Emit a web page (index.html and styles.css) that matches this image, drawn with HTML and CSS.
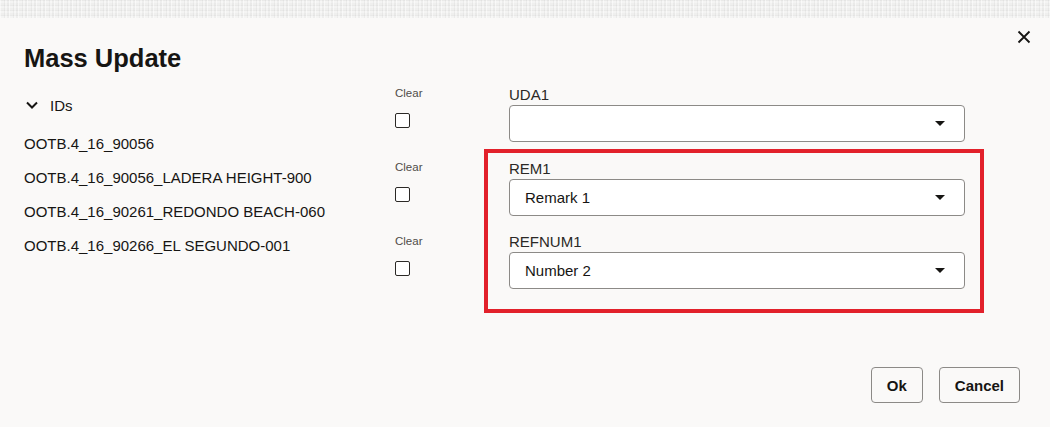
FILE: index.html
```html
<!DOCTYPE html>
<html lang="en">
<head>
<meta charset="utf-8">
<title>Mass Update</title>
<link rel="stylesheet" href="styles.css">
</head>
<body>
<div class="backdrop"></div>
<div class="dialog">
  <header class="dialog-header">
    <h1 class="title">Mass Update</h1>
    <button class="close" aria-label="Close">
      <svg width="14" height="14" viewBox="0 0 14 14"><path d="M1.5 1.5 L12.5 12.5 M12.5 1.5 L1.5 12.5" stroke="#161513" stroke-width="1.8" fill="none"/></svg>
    </button>
  </header>
  <div class="content">
    <section class="ids">
      <div class="ids-head">
        <svg class="chev" width="12" height="8" viewBox="0 0 12 8"><path d="M1 1.5 L6 6.5 L11 1.5" stroke="#161513" stroke-width="2" fill="none"/></svg>
        <span>IDs</span>
      </div>
      <ul class="id-list">
        <li>OOTB.4_16_90056</li>
        <li>OOTB.4_16_90056_LADERA HEIGHT-900</li>
        <li>OOTB.4_16_90261_REDONDO BEACH-060</li>
        <li>OOTB.4_16_90266_EL SEGUNDO-001</li>
      </ul>
    </section>
    <section class="clears">
      <div class="clear-item"><span class="clear-label">Clear</span><span class="checkbox"></span></div>
      <div class="clear-item"><span class="clear-label">Clear</span><span class="checkbox"></span></div>
      <div class="clear-item"><span class="clear-label">Clear</span><span class="checkbox"></span></div>
    </section>
    <section class="fields">
      <div class="field field-uda">
        <div class="field-label">UDA1</div>
        <div class="select"><span class="select-value"></span><svg class="arrow" width="10" height="5" viewBox="0 0 10 5"><polygon points="0,0 10,0 5,5" fill="#161513"/></svg></div>
      </div>
      <div class="highlight">
        <div class="field">
          <div class="field-label">REM1</div>
          <div class="select"><span class="select-value">Remark 1</span><svg class="arrow" width="10" height="5" viewBox="0 0 10 5"><polygon points="0,0 10,0 5,5" fill="#161513"/></svg></div>
        </div>
        <div class="field field-gap">
          <div class="field-label">REFNUM1</div>
          <div class="select"><span class="select-value">Number 2</span><svg class="arrow" width="10" height="5" viewBox="0 0 10 5"><polygon points="0,0 10,0 5,5" fill="#161513"/></svg></div>
        </div>
      </div>
    </section>
  </div>
  <footer class="dialog-footer">
    <button class="btn">Ok</button>
    <button class="btn">Cancel</button>
  </footer>
</div>
</body>
</html>
```

FILE: styles.css
```css
html, body {
  margin: 0;
  padding: 0;
}
body {
  width: 1050px;
  height: 427px;
  overflow: hidden;
  font-family: "Liberation Sans", Arial, sans-serif;
  color: #161513;
  background: #faf9f8;
}
.backdrop {
  height: 18px;
  background-color: #efefee;
  background-image:
    repeating-linear-gradient(90deg, rgba(255,255,255,0.5) 0 1px, rgba(0,0,0,0) 1px 4px, rgba(0,0,0,0.035) 4px 5px, rgba(255,255,255,0.25) 5px 7px, rgba(0,0,0,0.025) 7px 9px),
    repeating-linear-gradient(0deg, rgba(255,255,255,0.3) 0 2px, rgba(0,0,0,0.025) 2px 3px, rgba(255,255,255,0) 3px 5px);
}
.dialog {
  height: 409px;
  display: flex;
  flex-direction: column;
  background: #faf9f8;
}
.dialog-header {
  display: flex;
  align-items: flex-start;
  justify-content: space-between;
  padding: 0 14px 0 24px;
}
.title {
  margin: 24px 0 0;
  font-size: 25.5px;
  line-height: 32px;
  font-weight: 700;
}
.close {
  margin-top: 7px;
  width: 24px;
  height: 24px;
  padding: 0;
  border: 0;
  background: transparent;
  display: flex;
  align-items: center;
  justify-content: center;
}
.content {
  display: grid;
  grid-template-columns: 371px 89px 500px;
  padding: 12px 0 0 24px;
  align-items: start;
}
.ids-head {
  height: 38px;
  display: flex;
  align-items: center;
  font-size: 15px;
}
.chev {
  margin: 0 12px 0 2px;
}
.id-list {
  list-style: none;
  margin: 3px 0 0;
  padding: 0;
}
.id-list li {
  font-size: 15px;
  line-height: 34px;
  white-space: nowrap;
}
.clears {
  display: flex;
  flex-direction: column;
  gap: 32px;
}
.clear-item {
  display: flex;
  flex-direction: column;
  align-items: flex-start;
}
.clear-label {
  font-size: 11.5px;
  line-height: 14px;
  color: #4f4c48;
}
.checkbox {
  margin-top: 13px;
  width: 15px;
  height: 15px;
  box-sizing: border-box;
  border: 1.5px solid #2b2926;
  border-radius: 2px;
  background: #ffffff;
}
.fields {
  display: flex;
  flex-direction: column;
}
.field-uda {
  margin-left: 25px;
  width: 456px;
}
.field-label {
  font-size: 15px;
  line-height: 18px;
  color: #2b2926;
}
.select {
  margin-top: 1px;
  height: 37px;
  box-sizing: border-box;
  border: 1px solid #8c8a87;
  border-radius: 4px;
  background: #ffffff;
  display: flex;
  align-items: center;
  justify-content: space-between;
  padding: 0 19px 0 15px;
  font-size: 15px;
}
.arrow {
  display: block;
}
.highlight {
  margin-top: 7px;
  border: 4px solid #e2212b;
  padding: 7px 15px 20px 21px;
}
.field-gap {
  margin-top: 17px;
}
.dialog-footer {
  margin-top: auto;
  display: flex;
  justify-content: flex-end;
  gap: 16px;
  padding: 0 30px 24px 0;
}
.btn {
  height: 36px;
  padding: 0 15px;
  border: 1px solid #8c8a87;
  border-radius: 4px;
  background: #faf9f8;
  font-family: "Liberation Sans", Arial, sans-serif;
  font-size: 15px;
  font-weight: 700;
  color: #161513;
}
```
